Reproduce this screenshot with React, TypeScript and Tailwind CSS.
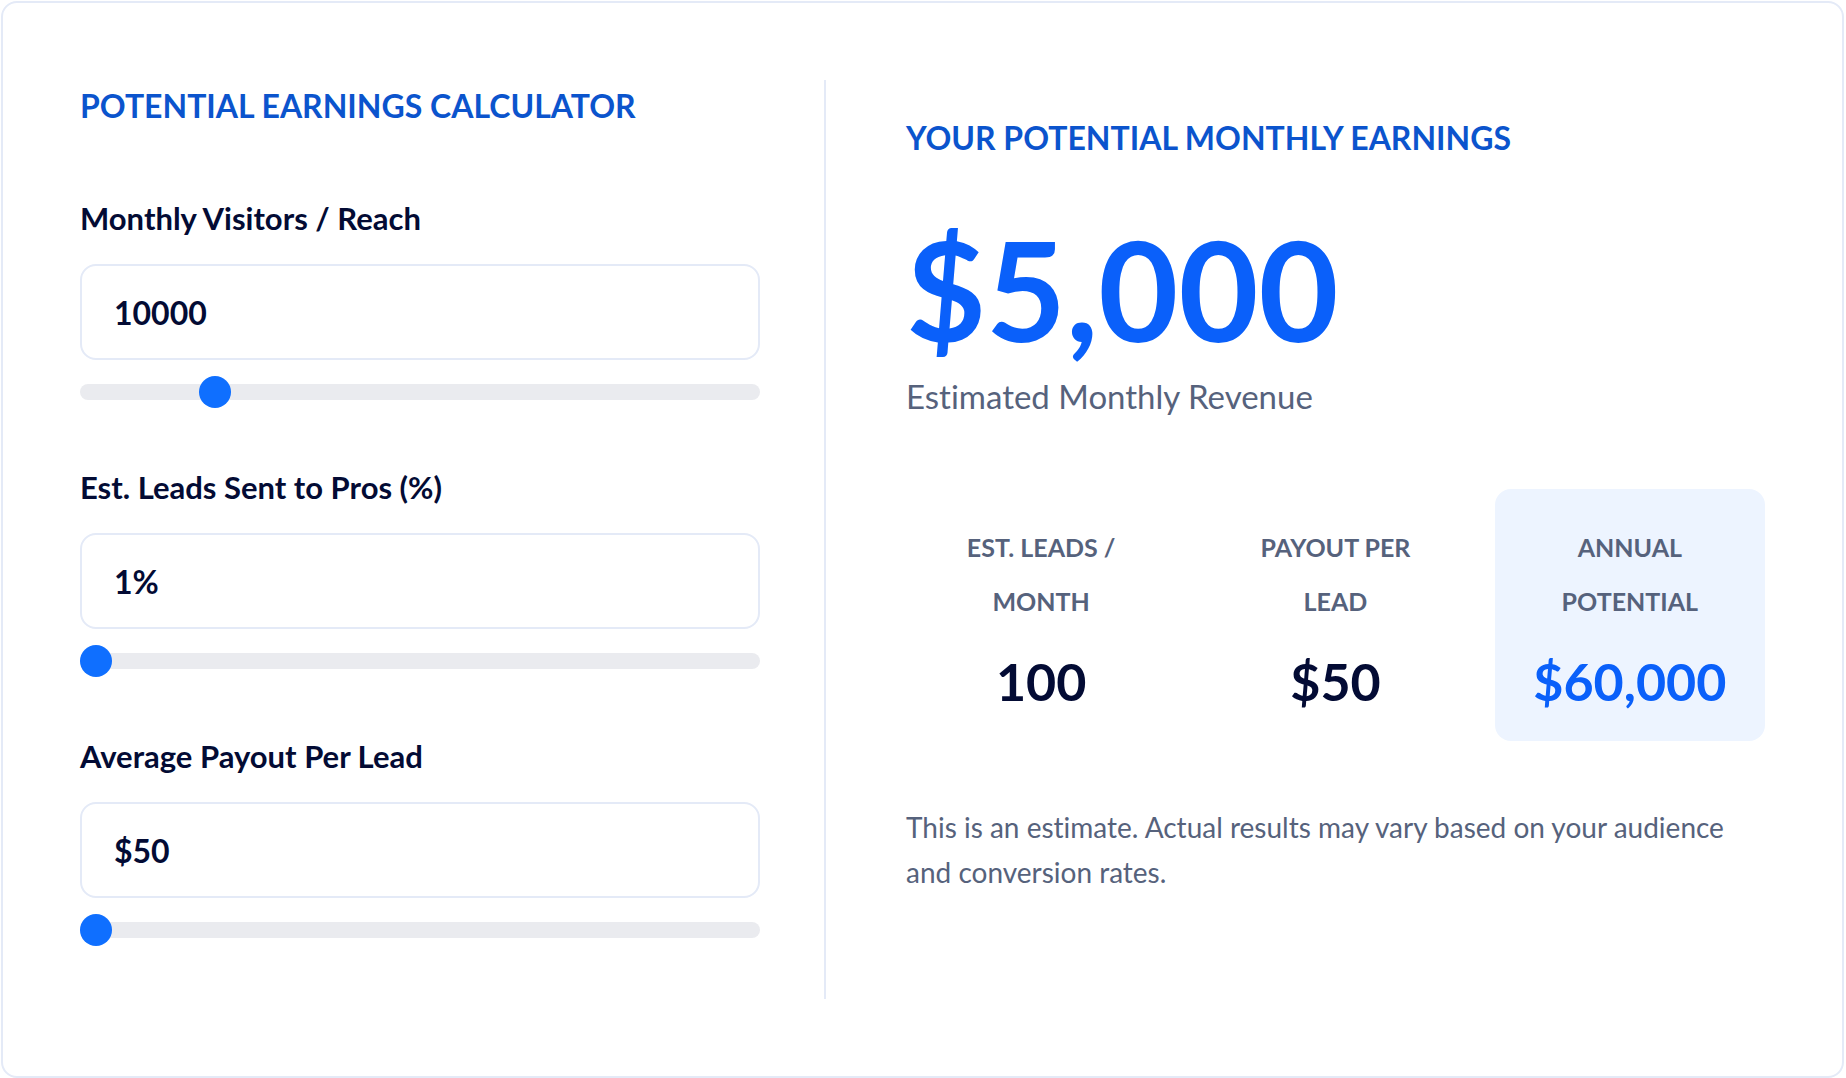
import { useState } from "react";

type FieldProps = {
  id: string;
  label: string;
  value: number;
  display: string;
  min: number;
  max: number;
  onChange: (value: number) => void;
};

function Field({ id, label, value, display, min, max, onChange }: FieldProps) {
  const update = (raw: string) => onChange(Number(raw.replace(/[^0-9]/g, "")));
  return (
    <div className="flex flex-col">
      <label htmlFor={id} className="mb-[18px] text-[31px] leading-14 font-bold">
        {label}
      </label>
      <input
        id={id}
        type="text"
        value={display}
        onChange={(e) => update(e.target.value)}
        className="h-24 w-full rounded-2xl border-2 border-[#e4eaf7] bg-white px-8 text-[32px] font-bold outline-none focus:border-[#0f6fff]"
      />
      <input
        type="range"
        aria-label={label}
        min={min}
        max={max}
        value={value}
        onChange={(e) => update(e.target.value)}
        className="mt-4 h-8 w-full cursor-pointer appearance-none bg-transparent [&::-webkit-slider-runnable-track]:h-4 [&::-webkit-slider-runnable-track]:rounded-full [&::-webkit-slider-runnable-track]:bg-[#eaebef] [&::-webkit-slider-thumb]:-mt-2 [&::-webkit-slider-thumb]:size-8 [&::-webkit-slider-thumb]:appearance-none [&::-webkit-slider-thumb]:rounded-full [&::-webkit-slider-thumb]:bg-[#0f6fff]"
      />
    </div>
  );
}

function Stat({ label, value, highlight = false }: { label: string; value: string; highlight?: boolean }) {
  return (
    <div className={highlight ? "rounded-2xl bg-[#edf4ff] px-8 pt-[31px] pb-8 text-center" : "px-8 pt-[31px] pb-8 text-center"}>
      <dt className="text-[25px] leading-[54px] font-bold text-[#56627c] uppercase">{label}</dt>
      <dd
        className={
          highlight
            ? "mt-[25px] text-[52px] leading-14 font-bold text-[#0a60fa]"
            : "mt-[25px] text-[52px] leading-14 font-bold"
        }
      >
        {value}
      </dd>
    </div>
  );
}

export default function App() {
  const [visitors, setVisitors] = useState(10000);
  const [rate, setRate] = useState(1);
  const [payout, setPayout] = useState(50);

  const leads = Math.round((visitors * rate) / 100);
  const monthly = leads * payout;
  const money = (n: number) => `$${n.toLocaleString("en-US")}`;

  return (
    <main className="min-h-screen bg-white p-px pr-0.5 font-[Lato,sans-serif] text-[#030b34] [font-variant-ligatures:none]">
      <section className="grid grid-cols-[746fr_859fr] gap-20 rounded-2xl border-2 border-[#e4eaf7] p-[77px]">
        <div className="border-r-2 border-[#e4eaf7] pr-16 pb-[53px]">
          <h2 className="mb-[58px] text-[32px] leading-[52px] font-bold text-[#0b54cd] uppercase">
            Potential Earnings Calculator
          </h2>
          <div className="flex flex-col gap-[51px]">
            <Field id="visitors" label="Monthly Visitors / Reach" value={visitors} display={`${visitors}`} min={1000} max={50000} onChange={setVisitors} />
            <Field id="rate" label="Est. Leads Sent to Pros (%)" value={rate} display={`${rate}%`} min={1} max={100} onChange={setRate} />
            <Field id="payout" label="Average Payout Per Lead" value={payout} display={`$${payout}`} min={50} max={500} onChange={setPayout} />
          </div>
        </div>

        <div className="pt-8">
          <h2 className="text-[32px] leading-[52px] font-bold text-[#0b54cd] uppercase">
            Your Potential Monthly Earnings
          </h2>
          <p className="mt-[53px] text-[138px] leading-36 font-bold text-[#0a60fa]">{money(monthly)}</p>
          <p className="mt-[9px] text-[33px] leading-[52px] text-[#56627c]">Estimated Monthly Revenue</p>
          <dl className="mt-[67px] grid grid-cols-3 gap-6">
            <Stat label="Est. Leads / Month" value={leads.toLocaleString("en-US")} />
            <Stat label="Payout Per Lead" value={money(payout)} />
            <Stat label="Annual Potential" value={money(monthly * 12)} highlight />
          </dl>
          <p className="mt-16 text-[28px] leading-[45px] text-[#56627c]">
            This is an estimate. Actual results may vary based on your audience and conversion rates.
          </p>
        </div>
      </section>
    </main>
  );
}
